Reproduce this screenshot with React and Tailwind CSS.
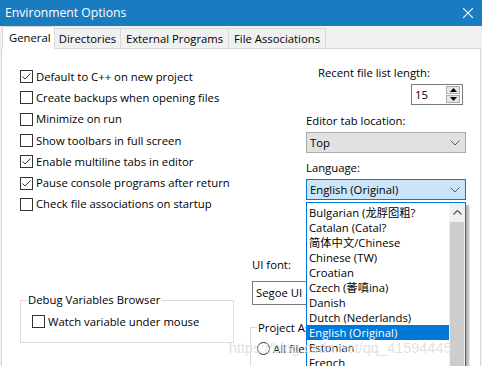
import React from 'react'

const FONT = "font-['Open_Sans','Noto_Sans_CJK_SC',sans-serif]"

function Check({ checked }) {
  return (
    <span className="w-[13px] h-[13px] border border-[#333333] bg-white flex items-center justify-center shrink-0">
      { checked && (
        <svg width="11" height="11" viewBox="0 0 11 11">
          <path d="M1.5 5.5 L4 8 L9.5 2.5" stroke="#333333" fill="none" strokeWidth="1" />
        </svg>
      ) }
    </span>
  )
}

function Chevron() {
  return (
    <svg width="10" height="6" viewBox="0 0 10 6" className="shrink-0">
      <path d="M0.5 0.5 L5 5 L9.5 0.5" stroke="#606060" fill="none" strokeWidth="1" />
    </svg>
  )
}

const options = [
  ['Default to C++ on new project', true],
  ['Create backups when opening files', false],
  ['Minimize on run', false],
  ['Show toolbars in full screen', false],
  ['Enable multiline tabs in editor', true],
  ['Pause console programs after return', true],
  ['Check file associations on startup', false],
]

const languages = [
  'Bulgarian (龙脬囵粗?',
  'Catalan (Catal?',
  '简体中文/Chinese',
  'Chinese (TW)',
  'Croatian',
  'Czech (萫嗔ina)',
  'Danish',
  'Dutch (Nederlands)',
  'English (Original)',
  'Estonian',
  'French',
  'Galician',
]

export default function App() {
  return (
    <div className={`w-[482px] h-[366px] overflow-hidden relative bg-[#f0f0f0] text-black text-[11.3px] leading-[16px] ${FONT}`}>
      {/* title bar */}
      <div className="h-[26px] bg-[#197bc0] flex items-center justify-between pl-[5px] pr-[9px] text-white">
        <span className="text-[12.2px]">Environment Options</span>
        <svg width="10" height="10" viewBox="0 0 10 10">
          <path d="M0 0 L10 10 M10 0 L0 10" stroke="#ffffff" strokeWidth="1.1" />
        </svg>
      </div>

      {/* tabs */}
      <div className="h-[22px] flex items-end pl-[2px] relative z-10">
        <div className="h-[23px] w-[53px] bg-white border border-b-0 border-[#d9d9d9] flex items-center pl-[6px] -mb-px">General</div>
        <div className="h-[20px] w-[66px] border border-l-0 border-b-0 border-[#d9d9d9] flex items-center justify-center pt-[1px]">Directories</div>
        <div className="h-[20px] w-[108px] border border-l-0 border-b-0 border-[#d9d9d9] flex items-center justify-center pt-[1px]">External Programs</div>
        <div className="h-[20px] w-[97px] border border-l-0 border-b-0 border-[#d9d9d9] flex items-center justify-center pt-[1px]">File Associations</div>
      </div>

      {/* page */}
      <div className="mx-[1px] h-[330px] bg-white border border-[#d9d9d9] flex">
        <div className="w-[248px] pl-[18px] pt-[17px] flex flex-col">
          { options.map(([label, checked]) => (
            <div key={ label } className="h-[21.3px] flex items-center gap-[3px]">
              <Check checked={ checked } />
              <span>{ label }</span>
            </div>
          )) }

          <fieldset className="mt-[77px] w-[214px] border border-[#dcdcdc] px-[6px] pb-[10px]">
            <legend className="px-px">Debug Variables Browser</legend>
            <div className="h-[21px] mt-[3px] ml-[5px] flex items-center gap-[3px]">
              <Check checked={ false } />
              <span>Watch variable under mouse</span>
            </div>
          </fieldset>
        </div>

        <div className="flex-1 flex flex-col pt-[16px]">
          <div className="pl-[68px]">Recent file list length:</div>
          <div className="ml-[161px] mt-[3px] w-[52px] h-[22px] border border-[#7a7a7a] flex items-center justify-between pl-[3px] pr-[2px]">
            <span>15</span>
            <div className="flex flex-col gap-px">
              <div className="w-[14px] h-[8px] bg-[#e5e5e5] border border-[#adadad] flex items-center justify-center">
                <svg width="7" height="4" viewBox="0 0 7 4"><path d="M0 4 L3.5 0 L7 4 Z" fill="#000" /></svg>
              </div>
              <div className="w-[14px] h-[8px] bg-[#e5e5e5] border border-[#adadad] flex items-center justify-center">
                <svg width="7" height="4" viewBox="0 0 7 4"><path d="M0 0 L3.5 4 L7 0 Z" fill="#000" /></svg>
              </div>
            </div>
          </div>

          <div className="pl-[56px] mt-[8px]">Editor tab location:</div>
          <div className="ml-[56px] mt-[3px] w-[160px] h-[22px] bg-[#e1e1e1] border border-[#adadad] flex items-center justify-between pl-[3px] pr-[5px]">
            <span>Top</span>
            <Chevron />
          </div>

          <div className="pl-[56px] mt-[7px]">Language:</div>
          <div className="ml-[56px] mt-[3px] w-[160px] h-[22px] bg-[#cce4f7] border border-[#0078d7] flex items-center justify-between pl-[3px] pr-[5px]">
            <span>English (Original)</span>
            <Chevron />
          </div>

          <div className="pl-[2px] mt-[57px]">UI font:</div>
          <div className="ml-[2px] mt-[8px] w-[214px] h-[25px] border border-[#7a7a7a] flex items-center pl-[3px]">Segoe UI</div>

          <fieldset className="mt-[15px] w-[214px] h-[60px] border border-[#dcdcdc] px-[6px]">
            <legend className="px-px">Project Associations</legend>
            <div className="h-[20px] mt-[3px] flex items-center gap-[3px]">
              <span className="w-[13px] h-[13px] rounded-full border border-[#333333] bg-white shrink-0" />
              <span>All files</span>
            </div>
          </fieldset>
        </div>
      </div>

      {/* open language list */}
      <div className="absolute left-[306px] top-[202px] w-[160px] h-[180px] bg-white border border-[#0078d7] shadow-[3px_3px_2px_rgba(0,0,0,0.3)] flex z-20">
        <div className="flex-1 pt-[2px] flex flex-col">
          { languages.map((name) => (
            <div
              key={ name }
              className={`h-[15px] leading-[15px] pl-[2px] whitespace-nowrap ${name === 'English (Original)' ? 'bg-[#0078d7] text-white' : ''}`}
            >
              { name }
            </div>
          )) }
        </div>
        <div className="w-[16px] flex flex-col bg-[#f0f0f0]">
          <div className="h-[19px] flex items-center justify-center">
            <svg width="9" height="5" viewBox="0 0 9 5"><path d="M0.5 4.5 L4.5 0.5 L8.5 4.5" stroke="#606060" fill="none" strokeWidth="1.4" /></svg>
          </div>
          <div className="flex-1 bg-[#cdcdcd] mx-px" />
        </div>
      </div>

      {/* watermark */}
      <div className="absolute left-[229px] top-[338px] z-30 text-[14.5px] leading-[20px] font-['Liberation_Sans',sans-serif] text-[rgba(205,205,205,0.6)] [text-shadow:0_0_1px_rgba(255,255,255,0.6)]">
        https://blog.csdn.net/qq_41594445
      </div>
    </div>
  )
}
